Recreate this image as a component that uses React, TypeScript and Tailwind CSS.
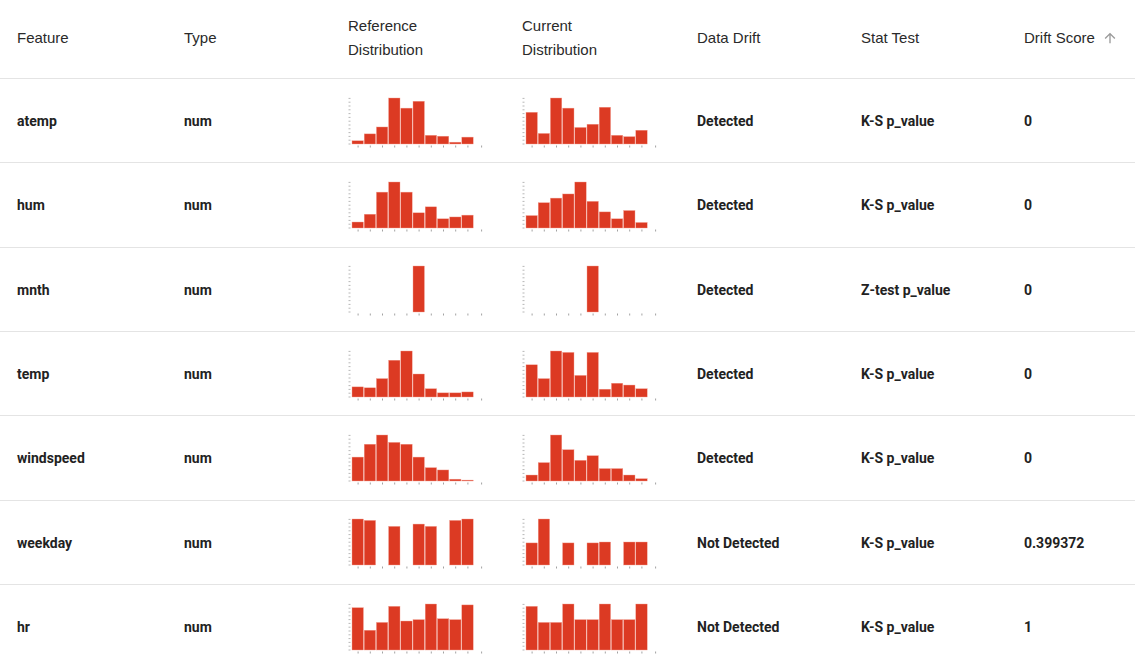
import React from "react";

type Row = {
  feature: string;
  type: string;
  ref: number[];
  cur: number[];
  drift: string;
  test: string;
  score: string;
};

const rows: Row[] = [
  {
    feature: "atemp",
    type: "num",
    ref: [0.07, 0.22, 0.37, 1, 0.78, 0.93, 0.19, 0.17, 0.04, 0.15],
    cur: [0.69, 0.23, 1, 0.78, 0.36, 0.43, 0.8, 0.19, 0.16, 0.3],
    drift: "Detected",
    test: "K-S p_value",
    score: "0",
  },
  {
    feature: "hum",
    type: "num",
    ref: [0.13, 0.3, 0.78, 1, 0.78, 0.33, 0.46, 0.2, 0.24, 0.28],
    cur: [0.27, 0.55, 0.65, 0.74, 1, 0.58, 0.35, 0.2, 0.38, 0.12],
    drift: "Detected",
    test: "K-S p_value",
    score: "0",
  },
  {
    feature: "mnth",
    type: "num",
    ref: [0, 0, 0, 0, 0, 1, 0, 0, 0, 0],
    cur: [0, 0, 0, 0, 0, 1, 0, 0, 0, 0],
    drift: "Detected",
    test: "Z-test p_value",
    score: "0",
  },
  {
    feature: "temp",
    type: "num",
    ref: [0.22, 0.2, 0.4, 0.8, 1, 0.5, 0.18, 0.09, 0.09, 0.11],
    cur: [0.7, 0.4, 1, 0.97, 0.47, 0.97, 0.17, 0.3, 0.26, 0.18],
    drift: "Detected",
    test: "K-S p_value",
    score: "0",
  },
  {
    feature: "windspeed",
    type: "num",
    ref: [0.52, 0.8, 1, 0.84, 0.8, 0.52, 0.29, 0.24, 0.04, 0.02],
    cur: [0.13, 0.4, 1, 0.68, 0.45, 0.55, 0.27, 0.27, 0.13, 0.05],
    drift: "Detected",
    test: "K-S p_value",
    score: "0",
  },
  {
    feature: "weekday",
    type: "num",
    ref: [1, 0.97, 0, 0.84, 0, 0.89, 0.84, 0, 0.97, 1],
    cur: [0.48, 1, 0, 0.48, 0, 0.48, 0.5, 0, 0.5, 0.5],
    drift: "Not Detected",
    test: "K-S p_value",
    score: "0.399372",
  },
  {
    feature: "hr",
    type: "num",
    ref: [0.92, 0.43, 0.6, 0.95, 0.63, 0.66, 1, 0.68, 0.66, 0.98],
    cur: [0.95, 0.6, 0.6, 1, 0.66, 0.66, 1, 0.66, 0.66, 1],
    drift: "Not Detected",
    test: "K-S p_value",
    score: "1",
  },
];

function Histogram({ values }: { values: number[] }) {
  const base = 47;
  const maxH = 46;
  const step = 12.2;
  const x0 = 5;
  return (
    <svg width="136" height="52" viewBox="0 0 136 52" className="block">
      {Array.from({ length: 13 }).map((_, i) => (
        <line
          key={`y${i}`}
          x1="1.5"
          x2="3.5"
          y1={base - i * 3.8}
          y2={base - i * 3.8}
          stroke="#9a9a9a"
          strokeWidth="0.7"
        />
      ))}
      {values.map((v, i) =>
        v > 0 ? (
          <rect
            key={`b${i}`}
            x={x0 + i * step}
            y={base - v * maxH}
            width={step - 0.8}
            height={v * maxH}
            fill="#dc3a23"
            stroke="#f2a193"
            strokeWidth="0.4"
          />
        ) : null,
      )}
      {Array.from({ length: 11 }).map((_, i) => (
        <line
          key={`x${i}`}
          x1={x0 + step / 2 + i * step + (i === 10 ? 1.5 : 0)}
          x2={x0 + step / 2 + i * step + (i === 10 ? 1.5 : 0)}
          y1="48.5"
          y2="50.5"
          stroke="#8a8a8a"
          strokeWidth="0.8"
        />
      ))}
    </svg>
  );
}

const cols = ["w-[167px]", "w-[164px]", "w-[174px]", "w-[175px]", "w-[164px]", "w-[163px]", "flex-1"];

export default function App() {
  return (
    <div
      className="w-[1135px] h-[657px] overflow-hidden bg-white text-[14px] text-[#222]"
      style={{ fontFamily: "Roboto, 'Liberation Sans', sans-serif" }}
    >
      {/* header */}
      <div
        className="flex h-[79px] items-center border-b border-[#e4e4e4] pb-[3px] text-[15px] leading-6 text-[#2a2a2a]"
        style={{ fontFamily: "'Liberation Sans', Arial, sans-serif" }}
      >
        <div className={`${cols[0]} pl-[17px]`}>Feature</div>
        <div className={`${cols[1]} pl-[17px]`}>Type</div>
        <div className={`${cols[2]} pl-[17px]`}>
          Reference
          <br />
          Distribution
        </div>
        <div className={`${cols[3]} pl-[17px]`}>
          Current
          <br />
          Distribution
        </div>
        <div className={`${cols[4]} pl-[17px]`}>Data Drift</div>
        <div className={`${cols[5]} pl-[17px]`}>Stat Test</div>
        <div className={`${cols[6]} pl-[17px] flex items-center gap-[7px]`}>
          Drift Score
          <svg width="16" height="16" viewBox="0 0 24 24" fill="#9a9a9a">
            <path d="M4 12l1.41 1.41L11 7.83V20h2V7.83l5.58 5.59L20 12l-8-8-8 8z" />
          </svg>
        </div>
      </div>
      {rows.map((r) => (
        <div
          key={r.feature}
          className="flex h-[84.33px] items-center border-b border-[#e4e4e4] pt-[2px] font-bold"
        >
          <div className={`${cols[0]} pl-[17px]`}>{r.feature}</div>
          <div className={`${cols[1]} pl-[17px]`}>{r.type}</div>
          <div className={`${cols[2]} pl-[16px] pt-[2px]`}>
            <Histogram values={r.ref} />
          </div>
          <div className={`${cols[3]} pl-[16px] pt-[2px]`}>
            <Histogram values={r.cur} />
          </div>
          <div className={`${cols[4]} pl-[17px]`}>{r.drift}</div>
          <div className={`${cols[5]} pl-[17px]`}>{r.test}</div>
          <div className={`${cols[6]} pl-[17px]`}>{r.score}</div>
        </div>
      ))}
    </div>
  );
}
